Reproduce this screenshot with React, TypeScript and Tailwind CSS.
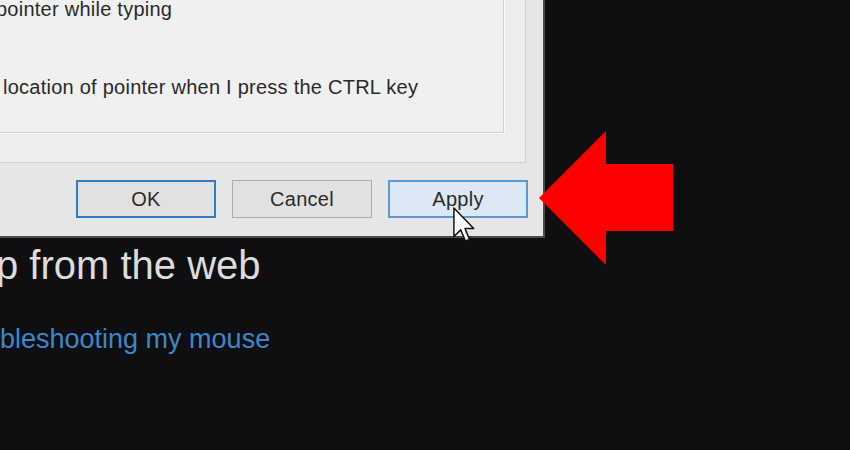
import React from 'react'

const uiFont = { fontFamily: '"Liberation Sans", Arial, sans-serif' }

function DialogButton({
  label,
  variant,
}: {
  label: string
  variant: 'default' | 'plain' | 'hover'
}) {
  const styles = {
    default: 'border-2 border-[#2f7cc2] bg-[#e1e1e1]',
    plain: 'border border-[#adadad] bg-[#e1e1e1]',
    hover: 'border-2 border-[#5b9bd3] bg-[#dce8f3]',
  }
  return (
    <button
      className={`flex h-[38px] w-[140px] items-center justify-center text-[20px] tracking-[0.25px] text-[#2a2a2a] ${styles[variant]}`}
    >
      {label}
    </button>
  )
}

function Cursor() {
  return (
    <svg
      className="absolute left-[453px] top-[207px]"
      width="22"
      height="36"
      viewBox="0 0 12 19.5"
    >
      <path
        d="M0.5 0.5 L0.5 16 L4.2 12.4 L6.8 18.5 L9 17.6 L6.5 11.6 L11.3 11.6 Z"
        fill="#fff"
        stroke="#111"
        strokeWidth="0.8"
        strokeLinejoin="round"
      />
    </svg>
  )
}

function RedArrow() {
  return (
    <svg
      className="absolute left-[539px] top-[131px]"
      width="135"
      height="135"
      viewBox="0 0 135 135"
    >
      <polygon points="0,67 67,0 67,33 134,33 134,100 67,100 67,134" fill="#ff0000" />
    </svg>
  )
}

export default function App() {
  return (
    <div
      className="relative h-[450px] w-[850px] overflow-hidden bg-[#0f0f11]"
      style={uiFont}
    >
      <div className="flex h-[238px] w-[545px] flex-col border-r-2 border-b-2 border-[#4a4a4a] bg-[#e6e6e6]">
        <div className="h-[163px] w-[526px] border-r border-b border-[#d2d2d2] bg-[#ededed]">
          <div className="h-[134px] w-[504px] border-r border-b border-[#d0d0d0] bg-[#f0f0f0] shadow-[1px_1px_0_#fafafa]">
            <div className="-mt-[1px] -ml-[4px] text-[20px] leading-[20px] tracking-[0.25px] text-[#2a2a2a]">
              pointer while typing
            </div>
            <div className="mt-[58px] ml-[3px] text-[20px] leading-[20px] tracking-[0.25px] text-[#2a2a2a]">
              location of pointer when I press the CTRL key
            </div>
          </div>
        </div>
        <div className="mt-[17px] flex justify-end gap-4 pr-[15px]">
          <DialogButton label="OK" variant="default" />
          <DialogButton label="Cancel" variant="plain" />
          <DialogButton label="Apply" variant="hover" />
        </div>
      </div>

      <div className="mt-[7px] -ml-[4px] text-[40px] leading-[40px] text-[#dcdcdc]">
        p from the web
      </div>
      <div className="mt-[41px] text-[27px] leading-[27px] text-[#3b87cc]">
        bleshooting my mouse
      </div>

      <Cursor />
      <RedArrow />
    </div>
  )
}
